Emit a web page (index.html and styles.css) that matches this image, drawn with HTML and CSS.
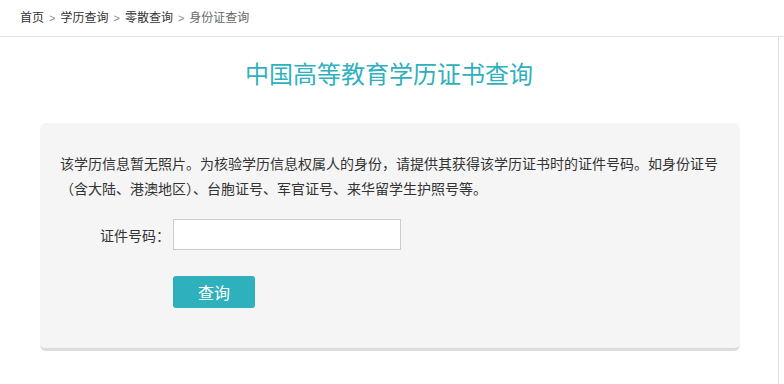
FILE: index.html
```html
<!DOCTYPE html>
<html lang="zh-CN">
<head>
    <meta charset="UTF-8">
    <title>身份证查询</title>
    <link rel="stylesheet" href="styles.css">
</head>
<body>

<!-- 面包屑 -->
<div class="crumbs">
    <a href="#">首页</a><span class="sep">&gt;</span><a href="#">学历查询</a><span class="sep">&gt;</span><a href="#">零散查询</a><span class="sep">&gt;</span><span class="current">身份证查询</span>
</div>

<div class="main">
    <h1>中国高等教育学历证书查询</h1>

    <div class="query-box">
        <p class="tips">该学历信息暂无照片。为核验学历信息权属人的身份，请提供其获得该学历证书时的证件号码。如身份证号（含大陆、港澳地区）、台胞证号、军官证号、来华留学生护照号等。</p>

        <div class="form-row">
            <label class="label" for="zjhm">证件号码：</label>
            <input class="text-input" id="zjhm" type="text">
        </div>
        <div class="form-row btn-row">
            <button class="btn" type="button">查询</button>
        </div>
    </div>
</div>

</body>
</html>
```

FILE: styles.css
```css
/* 基础 */
body {
    margin: 0;
    font-family: "Noto Sans CJK SC", "Liberation Sans", sans-serif;
    color: #333;
    background: #fff;
}

a {
    color: #333;
    text-decoration: none;
}

/* 面包屑 */
.crumbs {
    height: 36px;
    line-height: 34px;
    padding-left: 20px;
    font-size: 12px;
    border-bottom: 1px solid #e5e5e5;
}

.crumbs .sep {
    color: #888;
    margin: 0 5px;
    font-family: "Liberation Sans", sans-serif;
    font-size: 11px;
}

.crumbs .current {
    color: #666;
}

/* 主体 */
.main {
    width: 778px;
    height: 347px;
    border-right: 1px solid #e0e0e0;
}

h1 {
    margin: 0;
    padding: 20px 0 34px;
    font-size: 24px;
    line-height: 32px;
    font-weight: normal;
    text-align: center;
    color: #2fb0bd;
}

/* 查询框 */
.query-box {
    width: 660px;
    margin-left: 40px;
    padding: 28px 20px 40px;
    background: #f5f5f5;
    border-radius: 6px;
    border-bottom: 3px solid #dcdcdc;
}

.tips {
    margin: 0 0 18px;
    font-size: 14px;
    line-height: 25px;
}

.form-row {
    display: flex;
    align-items: center;
}

.label {
    width: 110px;
    text-align: right;
    font-size: 14px;
    margin-right: 3px;
}

.text-input {
    width: 226px;
    height: 29px;
    margin: 0;
    padding: 0 6px;
    box-sizing: border-box;
    width: 228px;
    height: 31px;
    border: 1px solid #ccc;
    background: #fff;
    outline: none;
}

.btn-row {
    margin-top: 26px;
    padding-left: 113px;
}

.btn {
    width: 82px;
    height: 32px;
    border: none;
    border-radius: 3px;
    background: #2fb0bd;
    color: #fff;
    font-family: inherit;
    font-size: 16px;
    cursor: pointer;
}
```
